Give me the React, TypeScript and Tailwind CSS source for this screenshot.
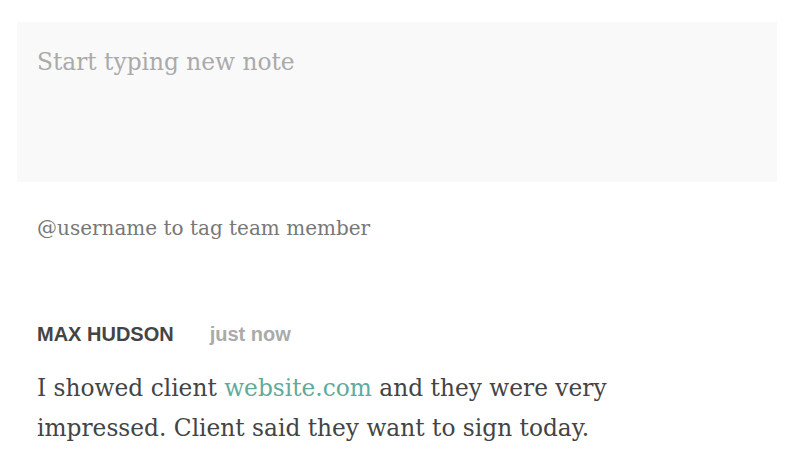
import React from 'react';

const serif = { fontFamily: '"DejaVu Serif", serif' };

const App = () => {
  return (
    <div className="min-h-screen w-full bg-white pt-[22px] px-[17px]">
      <div className="h-[160px] w-full bg-[#f9f9f9] px-5 pt-[24px]">
        <div className="text-[23.3px] leading-[32px] text-[#aaaaaa]" style={serif}>
          Start typing new note
        </div>
      </div>
      <div className="px-5 pt-[32px] text-[20px] leading-[28px] text-[#777777]" style={serif}>
        @username to tag team member
      </div>
      <div className="px-5 pt-[80px]">
        <div className="flex items-center gap-[36px] font-bold text-[20px] leading-[24px]" style={{ fontFamily: '"Liberation Sans", Arial, sans-serif' }}>
          <span className="text-[#444444]">MAX HUDSON</span>
          <span className="text-[#aaaaaa]">just now</span>
        </div>
        <p className="mt-[22px] max-w-[640px] text-[23.3px] leading-[40px] text-[#444444]" style={serif}>
          I showed client <span className="text-[#5fab9b]">website.com</span> and they were very impressed. Client said they want to sign today.
        </p>
      </div>
    </div>
  );
};

export default App;
